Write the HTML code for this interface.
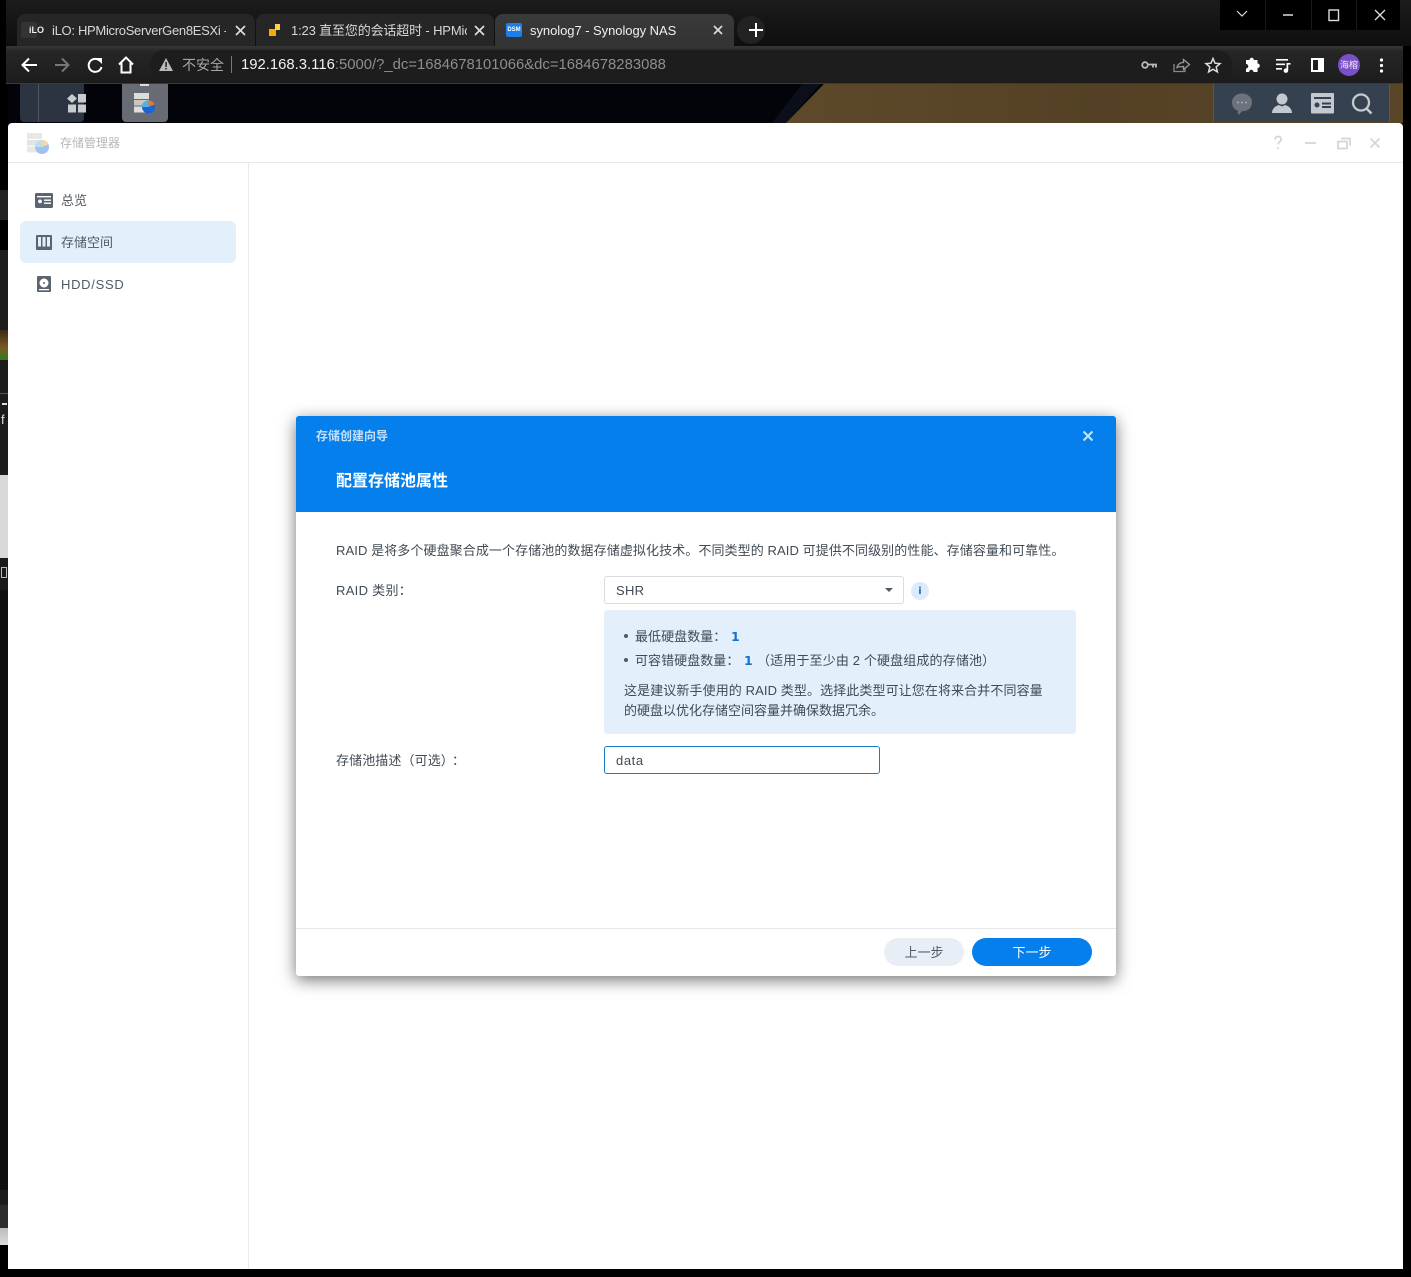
<!DOCTYPE html>
<html><head><meta charset="utf-8"><style>
html,body{margin:0;padding:0;background:#000}
body{width:1411px;height:1277px;position:relative;overflow:hidden;font-family:"Liberation Sans","Noto Sans CJK SC",sans-serif;font-size:13px;color:#414b55}
div,span,svg{position:absolute;white-space:nowrap}
b,i{position:static}
.t{line-height:20px}
.n{font:bold 12.500px/20px "DejaVu Sans",sans-serif;color:#1473ce}
</style></head><body>

<!-- browser top -->
<div style="left:6px;top:0;width:1405px;height:46px;background:linear-gradient(#1c1c1c,#0e0e0e)"></div>
<div style="left:0;top:0;width:6px;height:1277px;background:#000"></div>
<div style="left:1220px;top:0;width:180px;height:30px;background:#000"></div>
<div style="left:1265px;top:0;width:1px;height:30px;background:#1a1a1a"></div>
<div style="left:1311px;top:0;width:1px;height:30px;background:#1a1a1a"></div>
<div style="left:1356px;top:0;width:1px;height:30px;background:#1a1a1a"></div>
<svg style="left:1220px;top:0" width="180" height="30" fill="none" stroke="#ddd" stroke-width="1.200"><path d="M17 11l5 5 5-5"/><path d="M63 15h10" stroke-width="1.500"/><rect x="109" y="10" width="9.500" height="10.500" stroke-width="1.400"/><path d="M155 10l10 10M165 10l-10 10" stroke-width="1.300"/></svg>

<!-- tabs -->
<div style="left:17px;top:14px;width:238px;height:32px;background:#262626;border-radius:8px 8px 0 0"></div>
<div style="left:256px;top:14px;width:238px;height:32px;background:#262626;border-radius:8px 8px 0 0"></div>
<div style="left:495px;top:14px;width:239px;height:32px;background:linear-gradient(#3a3a3a,#333);border-radius:8px 8px 0 0"></div>
<div style="left:21px;top:22px;width:16px;height:16px;background:#333;border-radius:2px"></div>
<div style="left:29px;top:25px;font:bold 9px/10px 'Liberation Sans',sans-serif;color:#eee">iLO</div>
<div class="t" style="left:52px;top:21px;width:174px;overflow:hidden;color:#d8d8d8;font-size:13px;letter-spacing:-.3px">iLO: HPMicroServerGen8ESXi - </div>
<svg style="left:235px;top:25px" width="11" height="11" stroke="#ddd" stroke-width="1.700"><path d="M1 1l9 9M10 1l-9 9"/></svg>
<svg style="left:269px;top:23px" width="12" height="14"><rect x="0" y="6" width="7" height="7" fill="#f9ab00"/><rect x="6" y="1" width="5" height="6" fill="#ffd04c"/></svg>
<div class="t" style="left:291px;top:21px;width:176px;overflow:hidden;color:#d8d8d8;font-size:13px;letter-spacing:-.15px">1:23 直至您的会话超时 - HPMic</div>
<svg style="left:474px;top:25px" width="11" height="11" stroke="#ddd" stroke-width="1.700"><path d="M1 1l9 9M10 1l-9 9"/></svg>
<div style="left:506px;top:23px;width:16px;height:14px;background:#1a7fe8;border-radius:2px;color:#fff;font:bold 6px/14px 'Liberation Sans',sans-serif;text-align:center">DSM</div>
<div class="t" style="left:530px;top:21px;color:#f0f0f0;font-size:13px;letter-spacing:-.05px">synolog7 - Synology NAS</div>
<svg style="left:713px;top:25px" width="10" height="10" stroke="#ddd" stroke-width="1.600"><path d="M1 1l8 8M9 1l-8 8"/></svg>
<div style="left:737px;top:16px;width:28px;height:28px;background:#222;border-radius:50%"></div>
<svg style="left:749px;top:23px" width="14" height="14" stroke="#fff" stroke-width="2"><path d="M7 0v14M0 7h14"/></svg>

<!-- toolbar -->
<div style="left:6px;top:46px;width:1397px;height:37px;background:linear-gradient(#383838,#262626 14%,#1c1c1c)"></div>
<div style="left:6px;top:83px;width:1397px;height:1px;background:#3a3a3a"></div>
<div style="left:150px;top:50px;width:1082px;height:29px;background:#1d1d1d;border-radius:15px"></div>
<svg style="left:20px;top:55px" width="120" height="20" fill="none" stroke="#fff" stroke-width="2">
<path d="M17 10H3M9 3.500L2.500 10 9 16.500"/>
<path d="M35 10h13M42 3.500l6.500 6.500-6.500 6.500" stroke="#777"/>
<path d="M80 6a6.500 6.500 0 1 0 1.500 6"/><path d="M76 3h6v6z" fill="#fff" stroke="none"/>
<path d="M99 9.500l7-7 7 7M101.500 8v9.500h9V8"/></svg>
<svg style="left:158px;top:57px" width="16" height="15"><path d="M8 1L15 14H1z" fill="#bbb"/><rect x="7.300" y="5" width="1.500" height="5" fill="#222"/><rect x="7.300" y="11" width="1.500" height="1.500" fill="#222"/></svg>
<div class="t" style="left:182px;top:55px;color:#a5a5a5;font-size:14px">不安全</div>
<div style="left:231px;top:56px;width:1px;height:17px;background:#777"></div>
<div class="t" style="left:241px;top:55px;color:#8e8e8e;font-size:14.850px"><b style="font-weight:normal;color:#f2f2f2">192.168.3.116</b>:5000/?_dc=1684678101066&amp;dc=1684678283088</div>
<svg style="left:1141px;top:56px" width="84" height="18" fill="none" stroke="#bbb" stroke-width="1.300">
<circle cx="4" cy="9" r="2.800" stroke-width="1.800"/><path d="M7 8.500h8v3M12 9v2.500" stroke-width="1.800"/>
<path d="M33 8v7.500h11V12" stroke="#888"/><path d="M36 11.500c.5-3 3-5 6.500-5V3.500l6 5-6 5v-3c-3 0-5 .2-6.500 1z" stroke="#999"/>
<path d="M72 2.500l2 4.700 5 .4-3.800 3.300 1.200 5-4.400-2.700-4.400 2.700 1.200-5-3.800-3.300 5-.4z" stroke="#ddd" stroke-width="1.500"/></svg>
<svg style="left:1244px;top:56px" width="150" height="18" fill="#fff">
<path d="M3 5h3.500a2.200 2.200 0 0 1 4.400 0H14.500v3.500a2.300 2.300 0 0 1 0 4.600V17H10.500a2.200 2.200 0 0 0-4.400 0H3v-3.500a2.200 2.200 0 0 0 0-4.500z" transform="translate(-1,-1)"/>
<path d="M32 3h12v1.600H32zM32 7.500h9v1.600h-9zM32 12h6v1.600h-6zM42.500 7h4v1.600H44.200v6a2.300 2.300 0 1 1-1.700-2.200z"/>
<path fill-rule="evenodd" d="M67 2h13v14H67zM69 4v10h5V4z"/></svg>
<div style="left:1338px;top:54px;width:22px;height:22px;background:#7a50c8;border-radius:50%;color:#eee;font-size:9px;line-height:22px;text-align:center">海榕</div>
<svg style="left:1379px;top:58px" width="5" height="15" fill="#fff"><circle cx="2.500" cy="2" r="1.600"/><circle cx="2.500" cy="7.500" r="1.600"/><circle cx="2.500" cy="13" r="1.600"/></svg>

<!-- desktop strip -->
<div style="left:6px;top:84px;width:1397px;height:39px;background:#03040a"></div>
<div style="left:772px;top:84px;width:48px;height:39px;background:#0a0f1a;clip-path:polygon(30px 0,48px 0,14px 39px,0 39px)"></div>
<div style="left:786px;top:84px;width:617px;height:39px;background:linear-gradient(90deg,#5e4a2a,#544125 50%,#5a4526);clip-path:polygon(38px 0,617px 0,617px 39px,0 39px)"></div>
<div style="left:20px;top:84px;width:64px;height:38px;background:#2b3440;border-radius:0 0 4px 4px"></div>
<div style="left:38px;top:84px;width:1px;height:38px;background:#4c5561"></div>
<svg style="left:66px;top:94px" width="22" height="20" fill="#c8ccd0"><path d="M6 0l5 4.500-5 4.500-5-4.500z"/><rect x="12" y="0" width="8" height="8.500"/><rect x="2" y="10.500" width="8" height="8"/><rect x="12" y="10.500" width="8" height="8"/></svg>
<div style="left:122px;top:84px;width:46px;height:38px;background:#666b74;border-radius:0 0 4px 4px"></div>
<div style="left:140px;top:84px;width:9px;height:2px;background:#ddd"></div>
<svg style="left:133px;top:92px" width="24" height="24"><rect x="1" y="1" width="15" height="6" fill="#ddd"/><rect x="1" y="8" width="15" height="5.500" fill="#c9c6c0"/><rect x="1" y="14.500" width="15" height="6" fill="#ddd"/><circle cx="15.500" cy="15" r="6.500" fill="#1766d8"/><path d="M15.500 15V8.500a6.500 6.500 0 0 1 6 4z" fill="#e8762c"/><path d="M9 15a6.500 6.500 0 0 1 6.500-6.500V15z" fill="#4db4e8"/></svg>
<div style="left:1213px;top:84px;width:175px;height:38px;background:#35414e;border-left:1px solid #556;border-right:1px solid #556"></div>
<svg style="left:1230px;top:92px" width="150" height="24" fill="#a6adb6">
<path d="M12 1.500c5.800 0 10 3.800 10 9s-4.200 8.800-9 8.800c-.2 0-.8 0-1 .1L9 22.500c-.6.300-1.200 0-1.200-.8v-3C4 17.300 2 14.200 2 10.500c0-5.200 4.200-9 10-9z" fill="#6c737c"/><circle cx="8" cy="10.500" r="1" fill="#a6adb6"/><circle cx="12" cy="10.500" r="1" fill="#a6adb6"/><circle cx="16" cy="10.500" r="1" fill="#a6adb6"/>
<circle cx="52" cy="7" r="5.500" fill="#c4c9cf"/><path d="M42 21c0-4 3-7 7-8l3 1.500 3-1.500c4 1 7 4 7 8z" fill="#c4c9cf"/>
<path fill-rule="evenodd" d="M82 1h21a1 1 0 0 1 1 1v18.500a1 1 0 0 1-1 1H82a1 1 0 0 1-1-1V2a1 1 0 0 1 1-1zM84 5h17v2H84zM87 10.500a2.500 2.500 0 1 0 0 5 2.500 2.500 0 0 0 0-5zM92 10.500h9v2h-9zM92 14h9v2h-9z" fill="#c4c9cf"/>
<circle cx="131" cy="10.500" r="8" fill="none" stroke="#c4c9cf" stroke-width="2.300"/><path d="M136.500 16.500l5 5" stroke="#c4c9cf" stroke-width="2.600"/></svg>

<!-- left strip artifacts -->
<div style="left:0;top:84px;width:8px;height:1193px;background:#000"></div>
<div style="left:0;top:190px;width:8px;height:30px;background:#222"></div>
<div style="left:0;top:250px;width:8px;height:80px;background:#1d1d1d"></div>
<div style="left:0;top:330px;width:8px;height:30px;background:linear-gradient(#3a2a18,#7b5a22 60%,#2e7d1e)"></div>
<div style="left:0;top:360px;width:8px;height:115px;background:#1c1c1c"></div>
<div style="left:0;top:393px;width:8px;height:1px;background:#555"></div>
<div style="left:2px;top:403px;width:5px;height:1.500px;background:#ddd"></div>
<div style="left:1px;top:413px;font-size:13px;line-height:14px;color:#ddd">f</div>
<div style="left:0;top:475px;width:8px;height:83px;background:#d9d9d9"></div>
<div style="left:0;top:558px;width:8px;height:32px;background:#1a1a1a"></div>
<div style="left:1px;top:567px;width:6px;height:11px;border:1px solid #bbb;box-sizing:border-box"></div>
<div style="left:0;top:590px;width:8px;height:600px;background:#0e0e0e"></div>
<div style="left:0;top:1190px;width:8px;height:15px;background:#1c1c1c"></div>
<div style="left:0;top:1205px;width:8px;height:23px;background:#2c2c2c"></div>
<div style="left:0;top:1228px;width:8px;height:17px;background:linear-gradient(#bbb,#ddd)"></div>

<!-- window -->
<div style="left:8px;top:123px;width:1395px;height:1146px;background:#fff;border-radius:4px 4px 0 0"></div>
<div style="left:8px;top:162px;width:1395px;height:1px;background:#e6e8ea"></div>
<div style="left:248px;top:163px;width:1px;height:1106px;background:#e8eaec"></div>
<svg style="left:26px;top:131px;opacity:.4" width="24" height="24"><rect x="1" y="2" width="15" height="6" fill="#c8c8c8"/><rect x="1" y="9" width="15" height="5.500" fill="#bbb"/><rect x="1" y="15.500" width="15" height="6" fill="#c8c8c8"/><circle cx="16" cy="16" r="7" fill="#1766d8"/><path d="M16 16V9a7 7 0 0 1 6.500 4.500z" fill="#e8a02c"/><path d="M9 16a7 7 0 0 1 7-7v7z" fill="#4db4e8"/></svg>
<div class="t" style="left:60px;top:133px;color:#b4b7bb;font-size:12px">存储管理器</div>
<svg style="left:1270px;top:134px" width="116" height="18" fill="none" stroke="#d2d5d8" stroke-width="1.700">
<path d="M5 5.500c0-2 1.400-3 3.200-3s3.100 1 3.100 2.800c0 2.500-3.300 2.700-3.300 5.200"/><circle cx="8" cy="14" r="1" fill="#d2d5d8" stroke="none"/>
<path d="M35 9h11"/><path d="M68 7.500h9v7h-9zM71 4.500h9v7"/><path d="M100.500 4.500l9 9M109.500 4.500l-9 9"/></svg>

<!-- sidebar -->
<div style="left:20px;top:221px;width:216px;height:42px;background:#e3effb;border-radius:6px"></div>
<svg style="left:35px;top:193px" width="18" height="15"><path fill-rule="evenodd" fill="#5b6570" d="M1.500 0h15A1.500 1.500 0 0 1 18 1.500v12a1.500 1.500 0 0 1-1.500 1.500h-15A1.500 1.500 0 0 1 0 13.500v-12A1.500 1.500 0 0 1 1.500 0zM2 3v1.400h14V3zM5 6.500a1.900 1.900 0 1 0 0 3.800 1.900 1.900 0 0 0 0-3.800zM9 6.500v1.400h7V6.500zM9 9.500v1.400h7V9.500z"/></svg>
<svg style="left:36px;top:235px" width="16" height="15"><path fill-rule="evenodd" fill="#5b6570" d="M1 0h14a1 1 0 0 1 1 1v13a1 1 0 0 1-1 1H1a1 1 0 0 1-1-1V1a1 1 0 0 1 1-1zM2 2v9.500h3V2zM6.500 2v9.500h3V2zM11 2v9.500h3V2z"/></svg>
<svg style="left:37px;top:276px" width="14" height="16"><path fill-rule="evenodd" fill="#5b6570" d="M1 0h12a1 1 0 0 1 1 1v14a1 1 0 0 1-1 1H1a1 1 0 0 1-1-1V1a1 1 0 0 1 1-1zM7 2.500a4.500 4.500 0 1 0 0 9 4.500 4.500 0 0 0 0-9zM7 6a1 1 0 1 1 0 2 1 1 0 0 1 0-2zM2 13v1.300h10V13z"/></svg>
<div class="t" style="left:61px;top:191px;font-size:13px;color:#505a64">总览</div>
<div class="t" style="left:61px;top:233px;font-size:13px;color:#505a64">存储空间</div>
<div class="t" style="left:61px;top:275px;font-size:13px;color:#505a64;letter-spacing:.7px">HDD/SSD</div>

<!-- dialog -->
<div style="left:296px;top:416px;width:820px;height:560px;background:#fff;border-radius:3px;box-shadow:0 4px 16px rgba(0,0,0,.55)"></div>
<div style="left:296px;top:416px;width:820px;height:96px;background:#057feb;border-radius:3px 3px 0 0"></div>
<div class="t" style="left:316px;top:426px;font-size:12px;color:#c4e0fa;font-weight:bold">存储创建向导</div>
<svg style="left:1083px;top:431px" width="10" height="10" stroke="#bfe0fb" stroke-width="2.200"><path d="M.5 .5l9 9M9.500 .5l-9 9"/></svg>
<div class="t" style="left:336px;top:472px;font-size:16px;font-weight:bold;color:#fff">配置存储池属性</div>

<div class="t" style="left:336px;top:541px;font-size:13px;letter-spacing:.09px">RAID 是将多个硬盘聚合成一个存储池的数据存储虚拟化技术。不同类型的 RAID 可提供不同级别的性能、存储容量和可靠性。</div>
<div class="t" style="left:336px;top:581px;letter-spacing:.3px">RAID 类别：</div>
<div style="left:604px;top:576px;width:298px;height:26px;border:1px solid #d9dcdf;border-radius:3px;background:#fff"></div>
<div class="t" style="left:616px;top:581px;letter-spacing:.3px">SHR</div>
<div style="left:885px;top:588px;width:0;height:0;border-left:4.500px solid transparent;border-right:4.500px solid transparent;border-top:4.500px solid #505a64"></div>
<div style="left:911px;top:582px;width:18px;height:18px;border-radius:50%;background:#dcebfa"></div>
<div style="left:911px;top:583px;width:18px;text-align:center;font:bold 10px/18px 'DejaVu Sans',sans-serif;color:#1a6fc4">i</div>

<div style="left:604px;top:610px;width:472px;height:124px;background:#e3effb;border-radius:3px"></div>
<div style="left:624px;top:634px;width:4px;height:4px;background:#505a64;border-radius:50%"></div>
<div class="t" style="left:635px;top:627px;letter-spacing:.05px">最低硬盘数量：</div>
<div class="t n" style="left:731px;top:627px">1</div>
<div style="left:624px;top:658px;width:4px;height:4px;background:#505a64;border-radius:50%"></div>
<div class="t" style="left:635px;top:651px;letter-spacing:.05px">可容错硬盘数量：</div>
<div class="t n" style="left:744px;top:651px">1</div>
<div class="t" style="left:757px;top:651px;letter-spacing:.14px">（适用于至少由 2 个硬盘组成的存储池）</div>
<div class="t" style="left:624px;top:681px;letter-spacing:.1px">这是建议新手使用的 RAID 类型。选择此类型可让您在将来合并不同容量</div>
<div class="t" style="left:624px;top:701px">的硬盘以优化存储空间容量并确保数据冗余。</div>

<div class="t" style="left:336px;top:751px;letter-spacing:.1px">存储池描述（可选）</div>
<div class="t" style="left:452px;top:751px">：</div>
<div style="left:604px;top:746px;width:274px;height:26px;border:1px solid #1a7dc8;border-radius:3px;background:#fff"></div>
<div class="t" style="left:616px;top:751px;letter-spacing:.6px">data</div>

<div style="left:296px;top:928px;width:820px;height:1px;background:#e6e8ea"></div>
<div style="left:884px;top:938px;width:80px;height:28px;background:#e8eef5;border-radius:14px;text-align:center;line-height:30px;color:#505a64">上一步</div>
<div style="left:972px;top:938px;width:120px;height:28px;background:#057feb;border-radius:14px;text-align:center;line-height:30px;color:#fff">下一步</div>
</body></html>
